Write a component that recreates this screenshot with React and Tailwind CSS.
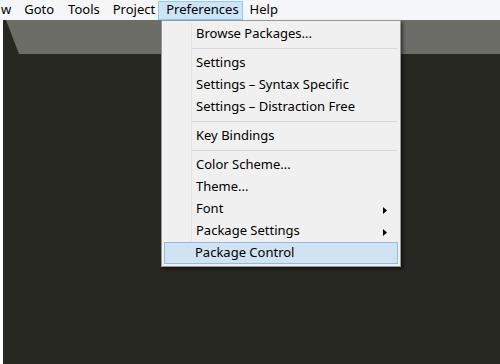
const items = [
  { label: "Browse Packages..." },
  { sep: true },
  { label: "Settings" },
  { label: "Settings – Syntax Specific" },
  { label: "Settings – Distraction Free" },
  { sep: true },
  { label: "Key Bindings" },
  { sep: true },
  { label: "Color Scheme..." },
  { label: "Theme..." },
  { label: "Font", sub: true },
  { label: "Package Settings", sub: true },
  { label: "Package Control", hover: true },
];

export default function App() {
  return (
    <div
      className="relative flex h-[364px] w-[500px] flex-col overflow-hidden bg-white text-black"
      style={{ fontFamily: '"Noto Sans", "Open Sans", sans-serif' }}
    >
      <div className="flex h-[20px] shrink-0 items-center bg-[#f5f6f8] text-[13px]">
        <span className="pl-[1px] pr-[6px]">w</span>
        <span className="px-[7px]">Goto</span>
        <span className="px-[7px]">Tools</span>
        <span className="pl-[6px] pr-[3px]">Project</span>
        <span className="flex h-[19px] items-center border border-[#99c9ef] bg-[#cce4f7] pl-[7px] pr-[3px]">Preferences</span>
        <span className="px-[7px]">Help</span>
      </div>

      <div className="flex flex-1 pl-[3px]">
        <div className="flex flex-1 flex-col bg-[#272822]">
          <div className="relative h-[34px] bg-[#6d6d67]">
            <svg className="absolute left-0 top-0" width="20" height="34" viewBox="0 0 20 34">
              <polygon points="0,0 3,0 16,34 0,34" fill="#272822" />
            </svg>
          </div>
          <div className="flex-1" />
        </div>
      </div>

      <div className="absolute left-[161px] top-[20px] w-[240px] border border-[#979797] bg-[#f0f0f0] p-[2px] text-[13px] shadow-[2px_2px_3px_rgba(0,0,0,0.5)]">
        <div className="relative">
          <div className="absolute bottom-0 left-[27px] top-0 w-[2px] border-l border-[#e2e3e3]" />
          {items.map((it, i) =>
            it.sep ? (
              <div key={i} className="flex h-[7px] items-center pl-[27px] pr-[1px]">
                <div className="h-[1px] flex-1 bg-[#d7d7d7]" />
              </div>
            ) : (
              <div
                key={i}
                className={`relative flex h-[22px] items-center ${it.hover ? "border border-[#90bbe8] bg-[#d1e2f2] pl-[30px]" : "border border-transparent pl-[31px]"}`}
              >
                <span>{it.label}</span>
                {it.sub && (
                  <svg className="absolute right-[10px] top-[8px]" width="4" height="7" viewBox="0 0 4 7">
                    <polygon points="0,0 4,3.5 0,7" fill="#000" />
                  </svg>
                )}
              </div>
            )
          )}
        </div>
      </div>
    </div>
  );
}
